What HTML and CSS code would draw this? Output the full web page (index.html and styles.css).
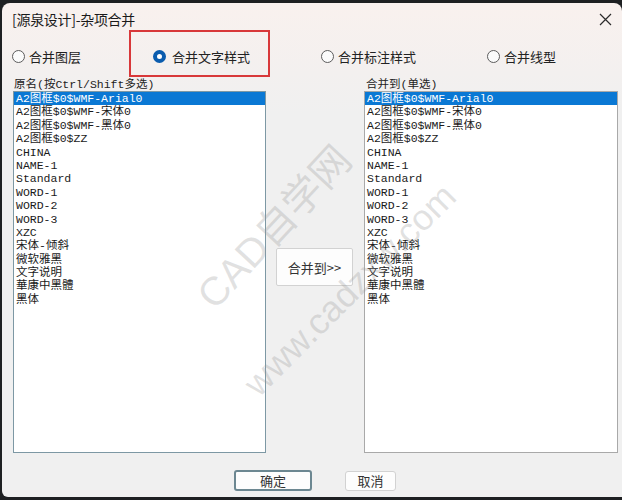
FILE: index.html
```html
<!DOCTYPE html>
<html lang="zh-CN">
<head>
    <meta charset="UTF-8">
    <title>[源泉设计]-杂项合并</title>
    <link rel="stylesheet" href="styles.css">
</head>
<body>
    <div class="window">
        <div class="titlebar">
            <span class="title">[源泉设计]-杂项合并</span>
            <svg class="close" width="13" height="13" viewBox="0 0 13 13">
                <path d="M1 1 L12 12 M12 1 L1 12" stroke="#2b2b2b" stroke-width="1.2" fill="none"/>
            </svg>
        </div>

        <div class="modes">
            <label class="mode m1"><span class="radio"></span>合并图层</label>
            <label class="mode m2"><span class="radio on"></span>合并文字样式</label>
            <label class="mode m3"><span class="radio"></span>合并标注样式</label>
            <label class="mode m4"><span class="radio"></span>合并线型</label>
        </div>

        <div class="lists">
            <div class="col left">
                <div class="cap">原名(按Ctrl/Shift多选)</div>
                <ul class="listbox focus">
                    <li class="sel">A2图框$0$WMF-Arial0</li>
                    <li>A2图框$0$WMF-宋体0</li>
                    <li>A2图框$0$WMF-黑体0</li>
                    <li>A2图框$0$ZZ</li>
                    <li>CHINA</li>
                    <li>NAME-1</li>
                    <li>Standard</li>
                    <li>WORD-1</li>
                    <li>WORD-2</li>
                    <li>WORD-3</li>
                    <li>XZC</li>
                    <li>宋体-倾斜</li>
                    <li>微软雅黑</li>
                    <li>文字说明</li>
                    <li>華康中黑體</li>
                    <li>黑体</li>
                </ul>
            </div>
            <div class="mid">
                <button class="btn merge">合并到&gt;&gt;</button>
            </div>
            <div class="col right">
                <div class="cap">合并到(单选)</div>
                <ul class="listbox">
                    <li class="sel">A2图框$0$WMF-Arial0</li>
                    <li>A2图框$0$WMF-宋体0</li>
                    <li>A2图框$0$WMF-黑体0</li>
                    <li>A2图框$0$ZZ</li>
                    <li>CHINA</li>
                    <li>NAME-1</li>
                    <li>Standard</li>
                    <li>WORD-1</li>
                    <li>WORD-2</li>
                    <li>WORD-3</li>
                    <li>XZC</li>
                    <li>宋体-倾斜</li>
                    <li>微软雅黑</li>
                    <li>文字说明</li>
                    <li>華康中黑體</li>
                    <li>黑体</li>
                </ul>
            </div>
        </div>

        <div class="actions">
            <button class="btn ok">确定</button>
            <button class="btn cancel">取消</button>
        </div>

        <!-- annotation + watermark overlays -->
        <div class="mark"></div>
        <div class="watermark w1">CAD自学网</div>
        <div class="watermark w2">www.cadzxw.com</div>
    </div>
</body>
</html>
```

FILE: styles.css
```css
body {
    margin: 0;
    background: #1e2022;
    font-family: "Noto Sans CJK SC", "Liberation Sans", sans-serif;
    overflow: hidden;
}
.window {
    position: relative;
    margin: 3px 0 0 2px;
    width: 620px;
    height: 494px;
    border-radius: 8px 8px 0 6px;
    background: linear-gradient(#f9f1ee, #f3f0ef 70px, #f0f0f0 110px);
    overflow: hidden;
}
.titlebar {
    height: 32px;
    display: flex;
    align-items: center;
    justify-content: space-between;
    padding: 0 10px 0 10px;
}
.title {
    font-size: 14px;
    color: #1a1a1a;
    letter-spacing: -0.3px;
}
.close {
    margin-top: 0;
}
.modes {
    height: 42px;
    display: flex;
    align-items: center;
    padding-left: 10px;
    font-size: 13px;
    color: #222;
}
.mode {
    display: flex;
    align-items: center;
}
.m1 { width: 141px; }
.m2 { width: 168px; }
.m3 { width: 166px; }
.radio {
    width: 11px;
    height: 11px;
    border: 1px solid #5c5c5c;
    border-radius: 50%;
    background: #fbfbfb;
    margin-right: 4px;
}
.radio.on {
    width: 5px;
    height: 5px;
    border: 4px solid #0a5cae;
    background: #fff;
    margin-right: 6px;
}
.lists {
    display: flex;
    padding-left: 11px;
    margin-top: 1px;
}
.col {
    display: flex;
    flex-direction: column;
}
.left { width: 253px; }
.right { width: 254px; }
.cap {
    height: 13px;
    line-height: 13px;
    font-family: "Liberation Mono", "Noto Sans CJK SC", monospace;
    font-size: 11.5px;
    color: #222;
    padding-left: 1px;
    white-space: nowrap;
}
.right .cap { padding-left: 2px; }
.listbox {
    list-style: none;
    margin: 0;
    padding: 0;
    height: 360px;
    background: #fff;
    border: 1px solid #a9a9a9;
    font-family: "Liberation Mono", "Noto Sans CJK SC", monospace;
    font-size: 11.5px;
    color: #1a1a1a;
}
.listbox.focus {
    border-color: #7d98a4;
}
.listbox li {
    height: 13.4px;
    line-height: 13.4px;
    padding-left: 2px;
    white-space: nowrap;
}
.listbox li.sel {
    background: #0a78d4;
    color: #fff;
}
.mid {
    width: 98px;
    padding-top: 170px;
    display: flex;
    justify-content: center;
    padding-right: 10px;
    box-sizing: border-box;
    padding-left: 9px;
}
.btn {
    font-family: "Noto Sans CJK SC", sans-serif;
    font-size: 13px;
    color: #333;
    background: #fdfdfd;
    border: 1px solid #d2d2d2;
    border-radius: 3px;
    padding: 0;
}
.merge {
    width: 77px;
    height: 38px;
    border-radius: 2px;
}
.actions {
    display: flex;
    align-items: center;
    padding-left: 232px;
    gap: 33px;
    margin-top: 17px;
}
.ok {
    width: 78px;
    height: 21px;
    border: 2px solid #6c8791;
    line-height: 15px;
}
.cancel {
    width: 51px;
    height: 20px;
    line-height: 16px;
}
.mark {
    position: absolute;
    left: 127px;
    top: 27px;
    width: 137px;
    height: 43px;
    border: 2px solid #d8383a;
}
.watermark {
    position: absolute;
    white-space: nowrap;
    color: rgba(150, 150, 150, 0.28);
    font-family: "Liberation Sans", "Noto Sans CJK SC", sans-serif;
    pointer-events: none;
    transform: translate(-50%, -50%) rotate(-47deg);
}
.w1 {
    left: 270px;
    top: 222px;
    font-size: 40px;
}
.w2 {
    left: 348px;
    top: 287px;
    font-size: 36px;
    transform: translate(-50%, -50%) rotate(-45deg);
}
```
